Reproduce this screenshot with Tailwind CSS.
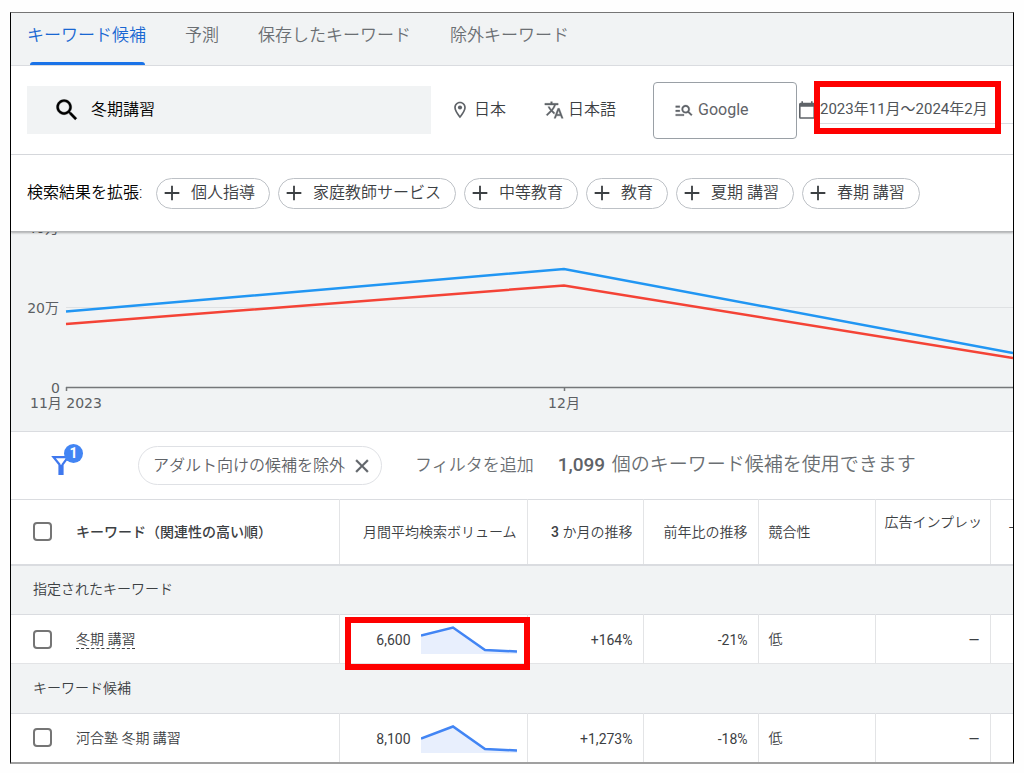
<!DOCTYPE html>
<html lang="ja">
<head>
<meta charset="utf-8">
<title>キーワード プランナー</title>
<script src="https://cdn.jsdelivr.net/npm/@tailwindcss/browser@4"></script>
</head>
<body class="bg-[#fefefe] px-[10px] pt-3 font-['Roboto','Noto_Sans_CJK_JP',sans-serif] text-[#3c4043]">
<main class="overflow-hidden border-x border-t border-b-2 border-x-black border-t-[#757575] border-b-[#a0a0a0] bg-white">

  <nav class="flex h-[53px] gap-[39px] border-b border-[#dadce0] bg-[#f1f3f4] pl-4 text-[17px] leading-6 text-[#6b6f73]">
    <a href="#" class="flex flex-col justify-between whitespace-nowrap pt-[10px] font-[350] text-[#1967d2]">キーワード候補<span class="ml-[3px] mr-px h-[3px] rounded-t bg-[#1a73e8]"></span></a>
    <a href="#" class="whitespace-nowrap pt-[10px] font-[350]">予測</a>
    <a href="#" class="whitespace-nowrap pt-[10px] font-[350]">保存したキーワード</a>
    <a href="#" class="whitespace-nowrap pt-[10px] font-[350]">除外キーワード</a>
  </nav>

  <section class="flex h-[89px] items-center border-b border-[#dadce0] pl-4 text-base text-[#3c4043]">
    <label class="flex h-12 w-[404px] shrink-0 items-center gap-2.5 bg-[#f1f3f4] pl-[26px]">
      <svg class="size-7 shrink-0" viewBox="0 0 24 24" fill="#000" stroke="#000" stroke-width=".3"><path d="M15.5 14h-.79l-.28-.27C15.41 12.59 16 11.11 16 9.5 16 5.91 13.09 3 9.5 3S3 5.91 3 9.5 5.91 16 9.5 16c1.61 0 3.09-.59 4.23-1.57l.27.28v.79l5 4.99L20.49 19l-4.99-5zm-6 0C7.01 14 5 11.99 5 9.5S7.01 5 9.5 5 14 7.01 14 9.5 11.99 14 9.5 14z"/></svg>
      <input type="text" value="冬期講習" aria-label="キーワード" class="min-w-0 flex-1 bg-transparent text-base font-[350] text-black outline-none">
    </label>
    <button class="ml-[19px] flex w-[94px] shrink-0 items-center gap-1 font-[350]">
      <svg class="size-5" viewBox="0 0 24 24" fill="#5f6368"><path d="M12 2C8.13 2 5 5.13 5 9c0 5.25 7 13 7 13s7-7.75 7-13c0-3.87-3.13-7-7-7zM7 9c0-2.76 2.24-5 5-5s5 2.24 5 5c0 2.88-2.88 7.19-5 9.88C9.92 16.21 7 11.85 7 9z"/><circle cx="12" cy="9" r="2.5"/></svg>日本
    </button>
    <button class="flex w-[109px] shrink-0 items-center gap-1 font-[350]">
      <svg class="size-5" viewBox="0 0 24 24" fill="#5f6368" stroke="#5f6368" stroke-width=".4"><path d="M12.87 15.07l-2.54-2.51.03-.03c1.74-1.94 2.98-4.17 3.71-6.53H17V4h-7V2H8v2H1v1.99h11.17C11.5 7.92 10.44 9.75 9 11.35 8.07 10.32 7.3 9.19 6.69 8h-2c.73 1.63 1.73 3.17 2.98 4.56l-5.09 5.02L4 19l5-5 3.11 3.11.76-2.04zM18.5 10h-2L12 22h2l1.12-3h4.75L21 22h2l-4.5-12zm-2.62 7l1.62-4.33L19.12 17h-3.24z"/></svg>日本語
    </button>
    <button class="flex h-[57px] w-36 shrink-0 items-center gap-1 rounded border border-[#9aa0a6] pl-5 text-[#5f6368]">
      <svg class="size-5" viewBox="0 0 24 24" fill="#5f6368" stroke="#5f6368" stroke-width=".3"><path d="M7 9H2V7h5v2zm0 3H2v2h5v-2zm13.59 7l-3.83-3.83c-.8.52-1.74.83-2.76.83-2.76 0-5-2.24-5-5s2.24-5 5-5 5 2.24 5 5c0 1.02-.31 1.96-.83 2.75L22 17.59 20.59 19zM17 11c0-1.65-1.35-3-3-3s-3 1.35-3 3 1.35 3 3 3 3-1.35 3-3zM2 19h10v-2H2v2z"/></svg>Google
    </button>
    <button class="relative mb-[5px] flex h-[53px] flex-1 items-center gap-[5px] pl-[2px] text-[15px] text-[#505458]">
      <svg class="mt-1 h-[18px] w-4 shrink-0" viewBox="2 1 20 22" fill="#5f6368"><path d="M20 3h-1V1h-2v2H7V1H5v2H4c-1.1 0-2 .9-2 2v16c0 1.1.9 2 2 2h16c1.1 0 2-.9 2-2V5c0-1.1-.9-2-2-2zm0 18H4V8h16v13z"/></svg>
      <span class="flex-1 whitespace-nowrap border-b border-[#dadce0] pt-1 text-left leading-7">2023年11月～2024年2月</span>
      <span class="absolute left-[17px] top-0 h-[53px] w-[187px] border-[6px] border-[#fe0000]"></span>
    </button>
  </section>

  <section class="relative z-10 flex h-[77px] items-center gap-2 whitespace-nowrap border-b border-[#b4b6b8] bg-white pl-4 text-base shadow-[0_1px_2px_rgba(0,0,0,0.3)]">
    <span class="mr-[6px] w-[115px] font-[350] text-black">検索結果を拡張:</span>
    <button class="flex h-[31px] items-center gap-2 rounded-full border border-[#bdc1c6] pl-1 pr-[14px] font-[350]"><svg class="size-[22px]" viewBox="0 0 24 24" fill="#3c4043"><path d="M20 13h-7v7h-2v-7H4v-2h7V4h2v7h7z"/></svg>個人指導</button>
    <button class="flex h-[31px] items-center gap-2 rounded-full border border-[#bdc1c6] pl-1 pr-[14px] font-[350]"><svg class="size-[22px]" viewBox="0 0 24 24" fill="#3c4043"><path d="M20 13h-7v7h-2v-7H4v-2h7V4h2v7h7z"/></svg>家庭教師サービス</button>
    <button class="flex h-[31px] items-center gap-2 rounded-full border border-[#bdc1c6] pl-1 pr-[14px] font-[350]"><svg class="size-[22px]" viewBox="0 0 24 24" fill="#3c4043"><path d="M20 13h-7v7h-2v-7H4v-2h7V4h2v7h7z"/></svg>中等教育</button>
    <button class="flex h-[31px] items-center gap-2 rounded-full border border-[#bdc1c6] pl-1 pr-[14px] font-[350]"><svg class="size-[22px]" viewBox="0 0 24 24" fill="#3c4043"><path d="M20 13h-7v7h-2v-7H4v-2h7V4h2v7h7z"/></svg>教育</button>
    <button class="flex h-[31px] items-center gap-2 rounded-full border border-[#bdc1c6] pl-1 pr-[14px] font-[350]"><svg class="size-[22px]" viewBox="0 0 24 24" fill="#3c4043"><path d="M20 13h-7v7h-2v-7H4v-2h7V4h2v7h7z"/></svg>夏期 講習</button>
    <button class="flex h-[31px] items-center gap-2 rounded-full border border-[#bdc1c6] pl-1 pr-[14px] font-[350]"><svg class="size-[22px]" viewBox="0 0 24 24" fill="#3c4043"><path d="M20 13h-7v7h-2v-7H4v-2h7V4h2v7h7z"/></svg>春期 講習</button>
  </section>

  <section class="h-[200px] overflow-hidden border-b border-[#dadce0] bg-[#f1f3f4]">
    <svg class="block h-[199px] w-[1002px]" viewBox="11 232 1002 199" font-family="DejaVu Sans, Noto Sans CJK JP, sans-serif" font-size="14" fill="#5c5f63">
      <text x="59" y="233" text-anchor="end">40万</text>
      <text x="59" y="313" text-anchor="end">20万</text>
      <text x="60" y="393" text-anchor="end">0</text>
      <text x="30" y="408">11月 2023</text>
      <text x="564" y="408" text-anchor="middle">12月</text>
      <path d="M66 307.500H1013" stroke="#dfe1e3" fill="none"/>
      <path d="M66 387.500H1013M66.500 387V391M564.500 387V391" stroke="#757779" stroke-width="1.500" fill="none"/>
      <path d="M66 324L564 285.500L1013 358" stroke="#f44336" stroke-width="2.500" fill="none"/>
      <path d="M66 311.500L564 269L1013 353" stroke="#2196f3" stroke-width="2.500" fill="none"/>
    </svg>
  </section>

  <section class="flex h-[67px] items-center whitespace-nowrap pl-[38px] text-[#5f6368]">
    <button class="relative h-11 w-[36px] shrink-0" aria-label="フィルタ 1">
      <svg class="absolute left-[2px] top-[11px] h-5 w-[20px]" viewBox="0 0 20 20" fill="none" stroke="#3f78ee" stroke-width="2.200"><path d="M2.500 2.100H17L11.500 9.500V18.900H8.500V9.500Z"/><path d="M10 10V20" stroke-width="4"/></svg>
      <span class="absolute left-[15px] top-0 size-[19px] rounded-full bg-[#4285f4] text-center text-sm font-bold leading-[19px] text-white">1</span>
    </button>
    <button class="ml-[53px] flex h-[39px] items-center gap-[6px] rounded-full border border-[#dfe1e5] pl-[14px] pr-2 text-base font-[350] text-[#5f6368]">アダルト向けの候補を除外
      <svg class="size-[22px]" viewBox="0 0 24 24" fill="#5f6368" stroke="#5f6368" stroke-width=".4"><path d="M19 6.410L17.590 5 12 10.590 6.410 5 5 6.410 10.590 12 5 17.590 6.410 19 12 13.410 17.590 19 19 17.590 13.410 12z"/></svg>
    </button>
    <button class="ml-[33px] text-[17px] font-[350] text-[#6b6f73]">フィルタを追加</button>
    <p class="ml-6 text-[19px] font-[350] text-[#6b6f73]"><b class="mr-[2px] font-medium text-[#5f6368]">1,099</b> 個のキーワード候補を使用できます</p>
  </section>

  <table class="w-full table-fixed border-collapse text-sm">
    <colgroup><col class="w-[328px]"><col class="w-[188px]"><col class="w-[116px]"><col class="w-[115px]"><col class="w-[117px]"><col class="w-[115px]"><col></colgroup>
    <thead>
      <tr class="h-[65px] whitespace-nowrap border-b-2 border-t border-t-[#dadce0] border-b-[#dadce0] [&>th]:pb-0 [&>th]:font-[350]">
        <th class="border-r border-[#e3e4e6] pl-[22px] text-left"><label class="flex items-center gap-6 font-medium"><input type="checkbox" class="size-[19px] shrink-0 appearance-none rounded-sm border-2 border-[#757575]">キーワード（関連性の高い順）</label></th>
        <th class="border-r border-[#e3e4e6] pr-[10px] text-right">月間平均検索ボリューム</th>
        <th class="border-r border-[#e3e4e6] pr-[10px] text-right"><span class="font-medium">3</span> か月の推移</th>
        <th class="border-r border-[#e3e4e6] pr-[10px] text-right">前年比の推移</th>
        <th class="border-r border-[#e3e4e6] pl-[10px] text-left">競合性</th>
        <th class="border-r border-[#e3e4e6] pl-[9px] text-left"><div class="mb-5">広告インプレッ</div></th>
        <th class="overflow-hidden pl-[18px] text-left"><div class="mb-5">上</div></th>
      </tr>
    </thead>
    <tbody>
      <tr class="h-[50px] border-b border-[#dadce0] bg-[#f1f3f4]"><th colspan="7" class="pb-[2px] pl-[22px] text-left font-[350]">指定されたキーワード</th></tr>
      <tr class="h-[49px] border-b border-[#e3e4e6]">
        <td class="border-r border-[#e3e4e6] pl-[22px]"><label class="flex items-center gap-6 font-[350]"><input type="checkbox" class="size-[19px] shrink-0 appearance-none rounded-sm border-2 border-[#757575]"><span class="border-b border-dashed border-[#3c4043] leading-[18px]">冬期 講習</span></label></td>
        <td class="relative border-r border-[#e3e4e6] pr-[10px] pt-[2px]"><div class="flex items-center justify-end gap-[10px]">6,600<svg class="h-[30px] w-24" viewBox="0 0 96 30"><path d="M0 10L32 2L64 24L96 26V29H0Z" fill="#e8effd"/><path d="M0 10.500L32 2.500L64 25L96 26.500" fill="none" stroke="#4285f4" stroke-width="2.500"/></svg></div><span class="absolute left-[5px] top-[2px] h-[53px] w-[185px] border-[6px] border-[#fe0000]"></span></td>
        <td class="border-r border-[#e3e4e6] pr-[10px] pt-[2px] text-right">+164%</td>
        <td class="border-r border-[#e3e4e6] pr-[10px] pt-[2px] text-right">-21%</td>
        <td class="border-r border-[#e3e4e6] pl-[10px] font-[350]">低</td>
        <td class="border-r border-[#e3e4e6] pr-[10px] pt-[2px] text-right">—</td>
        <td></td>
      </tr>
      <tr class="h-[50px] border-b border-[#dadce0] bg-[#f1f3f4]"><th colspan="7" class="pb-[2px] pl-[22px] text-left font-[350]">キーワード候補</th></tr>
      <tr class="h-[48px]">
        <td class="border-r border-[#e3e4e6] pl-[22px]"><label class="flex items-center gap-6 font-[350]"><input type="checkbox" class="size-[19px] shrink-0 appearance-none rounded-sm border-2 border-[#757575]">河合塾 冬期 講習</label></td>
        <td class="border-r border-[#e3e4e6] pr-[10px] pt-[2px]"><div class="flex items-center justify-end gap-[10px]">8,100<svg class="h-[30px] w-24" viewBox="0 0 96 30"><path d="M0 14L32 2L64 24L96 26V29H0Z" fill="#e8effd"/><path d="M0 14.500L32 2.500L64 25L96 26.500" fill="none" stroke="#4285f4" stroke-width="2.500"/></svg></div></td>
        <td class="border-r border-[#e3e4e6] pr-[10px] pt-[2px] text-right">+1,273%</td>
        <td class="border-r border-[#e3e4e6] pr-[10px] pt-[2px] text-right">-18%</td>
        <td class="border-r border-[#e3e4e6] pl-[10px] font-[350]">低</td>
        <td class="border-r border-[#e3e4e6] pr-[10px] pt-[2px] text-right">—</td>
        <td></td>
      </tr>
    </tbody>
  </table>
</main>
</body>
</html>
